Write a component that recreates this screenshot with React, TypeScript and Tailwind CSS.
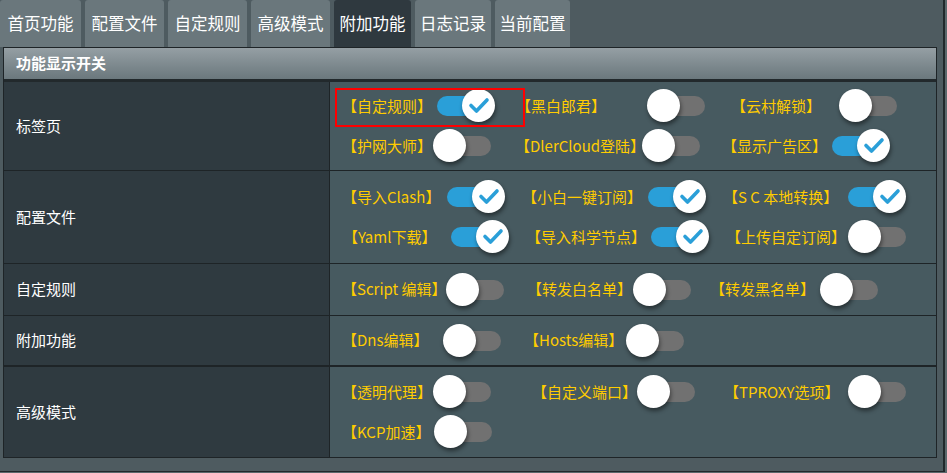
import React from 'react'

interface Item {
  label: string
  on: boolean
  w: string
  lw: string
}

const tabs = [
  { name: '首页功能', w: 'w-[81px]' },
  { name: '配置文件', w: 'w-[79px]' },
  { name: '自定规则', w: 'w-[79px]' },
  { name: '高级模式', w: 'w-[79px]' },
  { name: '附加功能', w: 'w-[77px]', active: true },
  { name: '日志记录', w: 'w-[76px]' },
  { name: '当前配置', w: 'w-[75px]' },
]

// each row: title, height class, lines of items
const rows: { title: string; h: string; border: string; lines: Item[][] }[] = [
  {
    title: '标签页',
    h: 'h-[89px]',
    border: 'border-b',
    lines: [
      [
        { label: '【自定规则】', on: true, w: 'w-[174px]', lw: 'w-[85px]' },
        { label: '【黑白郎君】', on: false, w: 'w-[215px]', lw: 'w-[131px]' },
        { label: '【云村解锁】', on: false, w: 'w-[180px]', lw: 'w-[108px]' },
      ],
      [
        { label: '【护网大师】', on: false, w: 'w-[173px]', lw: 'w-[91px]' },
        { label: '【DlerCloud登陆】', on: false, w: 'w-[207px]', lw: 'w-[127px]' },
        { label: '【显示广告区】', on: true, w: 'w-[180px]', lw: 'w-[100px]' },
      ],
    ],
  },
  {
    title: '配置文件',
    h: 'h-[93px]',
    border: 'border-b',
    lines: [
      [
        { label: '【导入Clash】', on: true, w: 'w-[180px]', lw: 'w-[95px]' },
        { label: '【小白一键订阅】', on: true, w: 'w-[201px]', lw: 'w-[116px]' },
        { label: '【S C 本地转换】', on: true, w: 'w-[190px]', lw: 'w-[115px]' },
      ],
      [
        { label: '【Yaml下载】', on: true, w: 'w-[183px]', lw: 'w-[98px]' },
        { label: '【导入科学节点】', on: true, w: 'w-[200px]', lw: 'w-[115px]' },
        { label: '【上传自定订阅】', on: false, w: 'w-[190px]', lw: 'w-[122px]' },
      ],
    ],
  },
  {
    title: '自定规则',
    h: 'h-[52px]',
    border: 'border-b',
    lines: [
      [
        { label: '【Script 编辑】', on: false, w: 'w-[185px]', lw: 'w-[104px]' },
        { label: '【转发白名单】', on: false, w: 'w-[183px]', lw: 'w-[106px]' },
        { label: '【转发黑名单】', on: false, w: 'w-[190px]', lw: 'w-[110px]' },
      ],
    ],
  },
  {
    title: '附加功能',
    h: 'h-[51px]',
    border: 'border-b-2',
    lines: [
      [
        { label: '【Dns编辑】', on: false, w: 'w-[182px]', lw: 'w-[101px]' },
        { label: '【Hosts编辑】', on: false, w: 'w-[190px]', lw: 'w-[102px]' },
      ],
    ],
  },
  {
    title: '高级模式',
    h: 'h-[90px]',
    border: '',
    lines: [
      [
        { label: '【透明代理】', on: false, w: 'w-[190px]', lw: 'w-[91px]' },
        { label: '【自定义端口】', on: false, w: 'w-[192px]', lw: 'w-[105px]' },
        { label: '【TPROXY选项】', on: false, w: 'w-[190px]', lw: 'w-[124px]' },
      ],
      [{ label: '【KCP加速】', on: false, w: 'w-[190px]', lw: 'w-[92px]' }],
    ],
  },
]

function Toggle({ on }: { on: boolean }) {
  return (
    <div className="relative h-[34px] w-[58px] shrink-0">
      <div
        className={
          'absolute left-[10px] top-[7px] h-[20px] w-[48px] rounded-full ' +
          (on ? 'bg-[#2a9fd8]' : 'bg-[#717171]')
        }
      />
      <div
        className={
          'absolute top-0 flex h-[33px] w-[33px] items-center justify-center rounded-full bg-white shadow-[1px_3px_4px_rgba(0,0,0,0.45)] ' +
          (on ? 'left-[35px]' : 'left-0')
        }
      >
        {on && (
          <svg width="33" height="33" viewBox="0 0 33 33">
            <path
              d="M9 16.5 L14.5 22 L25 11"
              fill="none"
              stroke="#2a9fd8"
              strokeWidth="3.6"
              strokeLinecap="round"
              strokeLinejoin="round"
            />
          </svg>
        )}
      </div>
    </div>
  )
}

export default function App() {
  return (
    <div className="h-[473px] w-[947px] overflow-hidden bg-[#5b686c] font-['Noto_Sans_CJK_SC',sans-serif]">
      <div className="h-[472px] w-[945px] border-b border-r-2 border-[#22292c] bg-[#4e5b60]">
        {/* tabs */}
        <div className="flex h-[47px] gap-[4px]">
          {tabs.map(t => (
            <div
              key={t.name}
              className={
                'flex h-full items-center justify-center rounded-t-[3px] text-[16.5px] text-white ' +
                t.w +
                ' ' +
                (t.active ? 'bg-[#2f393f]' : 'bg-[#6a777c]')
              }
            >
              {t.name}
            </div>
          ))}
        </div>

        {/* table */}
        <div className="ml-[3px] w-[934px] border border-[#1e2427]">
          <div className="flex h-[34px] items-center border-b-[3px] border-[#22292c] bg-gradient-to-b from-[#959fa4] to-[#6b787d] pl-[12px] text-[15px] font-bold text-white">
            功能显示开关
          </div>
          {rows.map((row, ri) => (
            <div key={row.title} className={'flex border-[#1e2427] ' + row.h + ' ' + row.border}>
              <div className="flex w-[326px] shrink-0 items-center border-r border-[#1e2427] bg-[#2f3a40] pl-[12px] text-[15px] text-white">
                {row.title}
              </div>
              <div className="relative flex flex-1 flex-col justify-center bg-[#475a60]">
                {row.lines.map((line, li) => (
                  <div key={li} className={'flex h-[40px] items-center ' + (ri === 1 && li === 1 ? 'pl-[13px]' : 'pl-[12px]')}>
                    {line.map(it => (
                      <div key={it.label} className={'flex shrink-0 items-center ' + it.w}>
                        <span className={'shrink-0 whitespace-nowrap text-[15px] text-[#ffcc00] ' + it.lw}>{it.label}</span>
                        <Toggle on={it.on} />
                      </div>
                    ))}
                  </div>
                ))}
                {ri === 0 && (
                  <div className="pointer-events-none absolute left-[5px] top-[6px] h-[39px] w-[190px] border-2 border-[#ff0000]" />
                )}
              </div>
            </div>
          ))}
        </div>
      </div>
    </div>
  )
}
